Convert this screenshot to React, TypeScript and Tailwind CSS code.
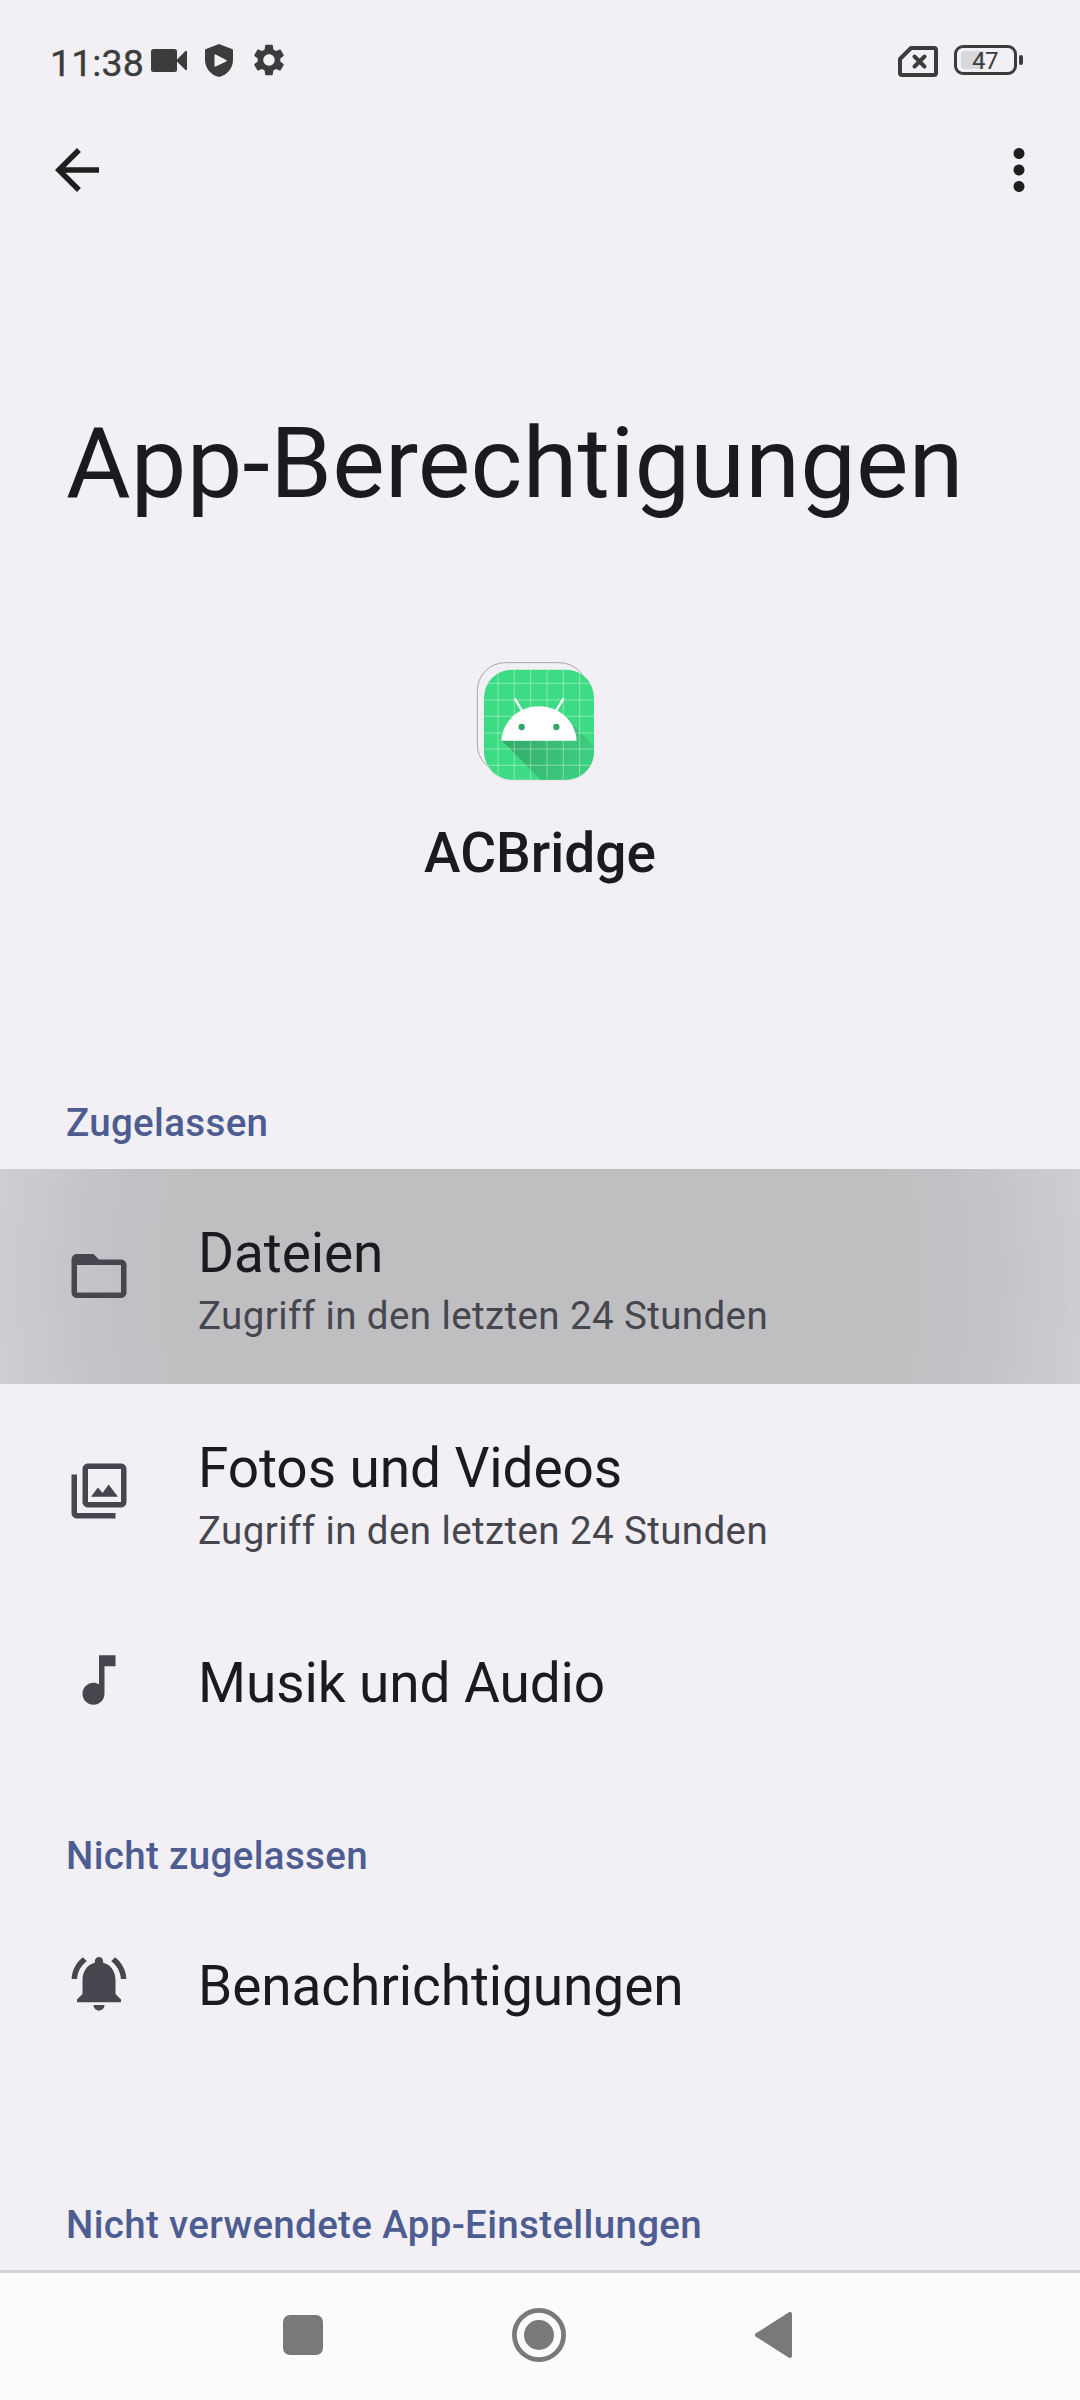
import type { ReactNode } from 'react';
import { MdArrowBack, MdFolderOpen, MdMoreVert, MdMusicNote, MdSettings } from 'react-icons/md';

function PhotosIcon() {
  return (
    <svg viewBox="0 0 24 24" className="size-[66px]" fill="currentColor">
      <path d="M20 4v12H8V4h12m0-2H8c-1.1 0-2 .9-2 2v12c0 1.1.9 2 2 2h12c1.1 0 2-.9 2-2V4c0-1.1-.9-2-2-2z" />
      <path d="M9.1 14.1l2.5-3.4 1.7 2 2.2-3.1 3.4 4.5zM2 6v14c0 1.1.9 2 2 2h14v-2H4V6H2z" />
    </svg>
  );
}

function BellIcon() {
  return (
    <svg viewBox="0 0 24 24" className="size-[66px]" fill="currentColor">
      <path d="M7.58 4.08L6.15 2.65C3.75 4.48 2.17 7.3 2.03 10.5h2c.15-2.65 1.51-4.97 3.55-6.42zm12.39 6.42h2c-.15-3.2-1.73-6.02-4.12-7.85l-1.42 1.43c2.02 1.45 3.39 3.77 3.54 6.42z" />
      <path d="M18 11c0-3.07-1.64-5.64-4.5-6.32V4c0-.83-.67-1.5-1.5-1.5s-1.5.67-1.5 1.5v.68C7.63 5.36 6 7.92 6 11v5l-2 2v1h16v-1l-2-2v-5zM10 20c0 1.1.9 2 2 2s2-.9 2-2z" />
    </svg>
  );
}

function AppIcon() {
  return (
    <svg viewBox="228 64 360 372" className="w-[120px] h-[124px]" fill="none">
      <defs>
        <clipPath id="tile">
          <rect x="252" y="90" width="330" height="330" rx="84" />
        </clipPath>
        <linearGradient id="shade" x1="320" y1="300" x2="540" y2="420" gradientUnits="userSpaceOnUse">
          <stop offset="0" stopColor="#34a968" />
          <stop offset="1" stopColor="#3dd080" />
        </linearGradient>
      </defs>
      <rect x="232" y="69" width="330" height="330" rx="84" stroke="#a9a7ac" strokeWidth="3" />
      <rect x="252" y="94" width="330" height="331" rx="84" fill="#e9e7ed" />
      <rect x="252" y="90" width="330" height="330" rx="84" fill="#3ddc84" />
      <g clipPath="url(#tile)">
        <path d="M306 303L424 423H590V328L522 258L500 303z" fill="url(#shade)" />
        <path
          d="M294 90v330M343 90v330M392 90v330M441 90v330M490 90v330M539 90v330M252 131h330M252 181h330M252 230h330M252 280h330M252 328h330M252 377h330"
          stroke="#fff"
          strokeOpacity=".38"
          strokeWidth="3"
        />
      </g>
      <path d="M346 179L367 215M489 179L467 215" stroke="#fff" strokeWidth="7" strokeLinecap="round" />
      <path d="M304 303C308 245 355 200 417 200S526 245 530 303z" fill="#fff" />
      <circle cx="365" cy="262" r="9.5" fill="#34a968" />
      <circle cx="469" cy="262" r="9.5" fill="#34a968" />
    </svg>
  );
}

function StatusBar() {
  return (
    <div className="flex h-[120px] items-center justify-between pl-[50px] pr-[57px] text-[#3c3c3d]">
      <div className="flex items-center">
        <span className="mt-[5px] w-[96px] text-[37.5px] leading-[46px] tracking-[0.1px] [-webkit-text-stroke:0.4px_currentColor]">11:38</span>
        <svg viewBox="0 0 46 36" className="ml-[3px] w-[46px] h-[36px]" fill="currentColor">
          <rect x="2" y="7" width="26" height="23" rx="2.5" />
          <path d="M27 18.500l9.500-9.500q1.500-.8 1.500.8v17.400q0 1.600-1.500.8z" />
        </svg>
        <svg viewBox="0 0 28 33" className="ml-[10px] w-[28px] h-[33px]" fill="currentColor">
          <path
            fillRule="evenodd"
            d="M14 0l13 5q1 .4 1 1.500V16c0 8-5.500 15-14 17C5.500 31 0 24 0 16V6.500Q0 5.400 1 5zM9.500 11v11q0 1.200 1.200.6l10.500-5q1.300-.8 0-1.600l-10.500-5.500q-1.200-.6-1.200.5z"
          />
        </svg>
        <MdSettings className="ml-[17px] size-[38px]" />
      </div>
      <div className="flex items-center">
        <svg viewBox="0 0 40 31" className="mt-[3px] w-[40px] h-[31px]" fill="none" stroke="currentColor" strokeWidth="4">
          <path d="M13 2h23q2 0 2 2v23q0 2-2 2H4q-2 0-2-2V13z" strokeLinejoin="round" />
          <path d="M16.500 10.500l10 10m0-10l-10 10" strokeLinecap="round" />
        </svg>
        <div className="ml-[16px] flex h-[30px] w-[63px] items-center rounded-[9px] border-3 border-current pl-[4px]">
          <div className="h-[18px] w-[23px] rounded-l-[3px] bg-[#d8d7da]"></div>
          <span className="-ml-[12px] mt-[2px] text-[24px] leading-[28px] tracking-[-0.5px]">47</span>
        </div>
        <div className="ml-[2px] h-[10px] w-[4px] rounded-[2px] bg-current"></div>
      </div>
    </div>
  );
}

function SectionTitle({ children }: { children: ReactNode }) {
  return (
    <h2 className="pl-[66px] text-[38.5px] leading-[46px] font-medium tracking-[0.34px] text-[#4d5d92]">{children}</h2>
  );
}

type Permission = {
  icon: ReactNode;
  label: string;
  note?: string;
  pressed?: boolean;
};

function PermissionRow({ icon, label, note, pressed }: Permission) {
  const height = note ? 'h-[215px]' : 'h-[161px]';
  const background = pressed
    ? 'bg-[radial-gradient(circle_at_center,#bfbfc1_0,#bfbfc1_355px,#c2c0c4_420px,#cfcdd1_545px)]'
    : '';
  return (
    <li className={`flex items-center pl-[66px] ${height} ${background}`}>
      <div className={`w-[132px] text-[#46464f] ${note ? 'pb-[2px]' : ''}`}>{icon}</div>
      <div className={note ? 'pt-[6px]' : 'pt-[7px]'}>
        <div className="text-[55px] leading-[64px] tracking-[-0.1px] text-[#1b1b1f]">{label}</div>
        {note && (
          <div className="mt-[8px] text-[38.5px] leading-[46px] tracking-[0.4px] text-[#46464f]">{note}</div>
        )}
      </div>
    </li>
  );
}

const allowed: Permission[] = [
  { icon: <MdFolderOpen className="size-[66px]" />, label: 'Dateien', note: 'Zugriff in den letzten 24 Stunden', pressed: true },
  { icon: <PhotosIcon />, label: 'Fotos und Videos', note: 'Zugriff in den letzten 24 Stunden' },
  { icon: <MdMusicNote className="size-[66px]" />, label: 'Musik und Audio' },
];

const denied: Permission[] = [{ icon: <BellIcon />, label: 'Benachrichtigungen' }];

export default function App() {
  return (
    <div className="flex h-[2400px] w-[1080px] flex-col overflow-hidden bg-[#f2f0f5] font-[Roboto,sans-serif]">
      <StatusBar />

      <header className="flex h-[100px] items-center justify-between pl-[44px] pr-[28px] text-[#1f1f1f]">
        <MdArrowBack className="size-[66px]" />
        <MdMoreVert className="size-[66px]" />
      </header>

      <h1 className="mt-[183px] pl-[66px] text-[99px] leading-[120px] tracking-[0.27px] text-[#1b1b1f]">App-Berechtigungen</h1>

      <div className="mt-[138px] pl-[476px]">
        <AppIcon />
      </div>
      <p className="mt-[36px] text-center text-[55px] leading-[64px] font-medium text-[#1b1b1f]">ACBridge</p>

      <main className="mt-[215px] flex-1">
        <SectionTitle>Zugelassen</SectionTitle>
        <ul className="mt-[23px]">
          {allowed.map(item => (
            <PermissionRow key={item.label} {...item} />
          ))}
        </ul>
        <div className="mt-[73px]">
          <SectionTitle>Nicht zugelassen</SectionTitle>
        </div>
        <ul className="mt-[23px]">
          {denied.map(item => (
            <PermissionRow key={item.label} {...item} />
          ))}
        </ul>
        <div className="mt-[139px]">
          <SectionTitle>Nicht verwendete App-Einstellungen</SectionTitle>
        </div>
      </main>

      <nav className="flex h-[130px] shrink-0 items-center border-t-3 border-[#d4d4d5] bg-[#fbfbfb] pl-[283px] pb-[3px] text-[#797979]">
        <div className="size-[40px] rounded-[7px] bg-current"></div>
        <svg viewBox="0 0 54 54" className="ml-[189px] size-[54px]" fill="currentColor">
          <circle cx="27" cy="27" r="24.600" fill="none" stroke="currentColor" strokeWidth="4.800" />
          <circle cx="27" cy="27" r="15" />
        </svg>
        <svg viewBox="0 0 37 46" className="ml-[189px] w-[37px] h-[46px]" fill="currentColor" stroke="currentColor" strokeWidth="4" strokeLinejoin="round">
          <path d="M2 23L35 2v42z" />
        </svg>
      </nav>
    </div>
  );
}
